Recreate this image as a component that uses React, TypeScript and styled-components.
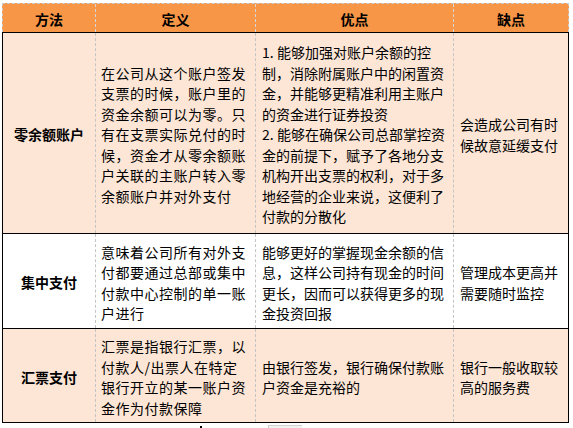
import type { FC } from 'react';
import styled, { createGlobalStyle } from 'styled-components';

interface RowData {
  label: string;
  bg: string;
  height: number;
  definition: string[];
  pros: string[];
  cons: string[];
}

const rows: RowData[] = [
  {
    label: '零余额账户',
    bg: '#fde6d6',
    height: 200,
    definition: [
      '在公司从这个账户签发',
      '支票的时候，账户里的',
      '资金余额可以为零。只',
      '有在支票实际兑付的时',
      '候，资金才从零余额账',
      '户关联的主账户转入零',
      '余额账户并对外支付',
    ],
    pros: [
      '1.能够加强对账户余额的控',
      '制，消除附属账户中的闲置资',
      '金，并能够更精准利用主账户',
      '的资金进行证券投资',
      '2.能够在确保公司总部掌控资',
      '金的前提下，赋予了各地分支',
      '机构开出支票的权利，对于多',
      '地经营的企业来说，这便利了',
      '付款的分散化',
    ],
    cons: ['会造成公司有时', '候故意延缓支付'],
  },
  {
    label: '集中支付',
    bg: '#ffffff',
    height: 94,
    definition: ['意味着公司所有对外支', '付都要通过总部或集中', '付款中心控制的单一账', '户进行'],
    pros: ['能够更好的掌握现金余额的信', '息，这样公司持有现金的时间', '更长，因而可以获得更多的现', '金投资回报'],
    cons: ['管理成本更高并', '需要随时监控'],
  },
  {
    label: '汇票支付',
    bg: '#fde6d6',
    height: 93,
    definition: ['汇票是指银行汇票，以', '付款人/出票人在特定', '银行开立的某一账户资', '金作为付款保障'],
    pros: ['由银行签发，银行确保付款账', '户资金是充裕的'],
    cons: ['银行一般收取较', '高的服务费'],
  },
];

const GlobalStyle = createGlobalStyle`
  body {
    margin: 0;
    background: #ffffff;
    font-family: "Noto Sans CJK SC", "Noto Sans", sans-serif;
    color: #000;
  }
`;

const COLUMNS = '92px 160px 198px 115px';

const Page = styled.div`
  padding: 3px 0 0 2px;
  width: 573px;
  height: 428px;
  box-sizing: border-box;
  overflow: hidden;
`;

const HeaderRow = styled.div`
  display: grid;
  grid-template-columns: ${COLUMNS};
  width: 567px;
  box-sizing: border-box;
  height: 29px;
  background: #f79646;
  border-top: 1px dashed #c9c9c9;
  border-left: 1px dashed #c9c9c9;
  border-right: 1px dashed #c9c9c9;
`;

const HeaderCell = styled.div<{ $first?: boolean }>`
  display: flex;
  align-items: center;
  justify-content: center;
  font-size: 14px;
  font-weight: 700;
  padding-top: 1px;
  border-left: ${({ $first }) => ($first ? 'none' : '1px dashed #d6d6d6')};
`;

const Body = styled.div`
  width: 567px;
  box-sizing: border-box;
  border: 1px solid #000;
`;

const Row = styled.div<{ $bg: string; $height: number; $first?: boolean }>`
  display: grid;
  grid-template-columns: ${COLUMNS};
  height: ${({ $height }) => $height}px;
  background: ${({ $bg }) => $bg};
  border-top: ${({ $first }) => ($first ? 'none' : '1px solid #000')};
`;

const Cell = styled.div<{ $first?: boolean; $pad?: number }>`
  display: flex;
  flex-direction: column;
  justify-content: center;
  align-items: ${({ $first }) => ($first ? 'center' : 'flex-start')};
  padding: 3px 0 0 ${({ $pad }) => $pad ?? 0}px;
  font-size: 14px;
  line-height: 20.5px;
  border-left: ${({ $first }) => ($first ? 'none' : '1px dashed #c4c4c4')};
`;

const Label = styled.span`
  font-weight: 700;
`;

const Line = styled.span<{ $spacing?: number }>`
  display: block;
  white-space: nowrap;
  letter-spacing: ${({ $spacing }) => $spacing ?? 0}px;
`;

// list numbers in the source are half-width monospace, a bit wider than Noto's
const Num = styled.span`
  display: inline-block;
  width: 15px;
`;

const Leftovers = styled.div`
  display: flex;
  align-items: flex-end;
  height: 7px;
`;

const Tick = styled.div`
  width: 2px;
  height: 4px;
  margin-left: 198px;
  background: #000;
`;

const GreyCell = styled.div`
  width: 33px;
  height: 4px;
  margin-left: 66px;
  background: #f2f2f2;
  border-top: 1px solid #d0d0d0;
  border-left: 1px solid #d0d0d0;
`;

const Lines: FC<{ items: string[]; spacing?: number }> = ({ items, spacing }) => (
  <>
    {items.map((text, i) => {
      const m = text.match(/^(\d\.)(.*)$/);
      return (
        <Line key={i} $spacing={spacing}>
          {m ? (
            <>
              <Num>{m[1]}</Num>
              {m[2]}
            </>
          ) : (
            text
          )}
        </Line>
      );
    })}
  </>
);

const App: FC = () => (
  <>
    <GlobalStyle />
    <Page>
      <HeaderRow>
        <HeaderCell $first>方法</HeaderCell>
        <HeaderCell>定义</HeaderCell>
        <HeaderCell>优点</HeaderCell>
        <HeaderCell>缺点</HeaderCell>
      </HeaderRow>
      <Body>
        {rows.map((row, index) => (
          <Row key={row.label} $bg={row.bg} $height={row.height} $first={index === 0}>
            <Cell $first>
              <Label>{row.label}</Label>
            </Cell>
            <Cell $pad={5}>
              <Lines items={row.definition} spacing={0.5} />
            </Cell>
            <Cell $pad={6}>
              <Lines items={row.pros} />
            </Cell>
            <Cell $pad={6}>
              <Lines items={row.cons} />
            </Cell>
          </Row>
        ))}
      </Body>
      <Leftovers>
        <Tick />
        <GreyCell />
      </Leftovers>
    </Page>
  </>
);

export default App;
